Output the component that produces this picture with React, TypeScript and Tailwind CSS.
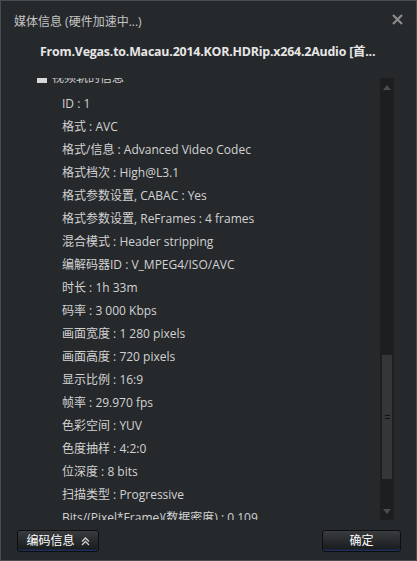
import React from "react";

const rows: string[] = [
  "ID : 1",
  "格式 : AVC",
  "格式/信息 : Advanced Video Codec",
  "格式档次 : High@L3.1",
  "格式参数设置, CABAC : Yes",
  "格式参数设置, ReFrames : 4 frames",
  "混合模式 : Header stripping",
  "编解码器ID : V_MPEG4/ISO/AVC",
  "时长 : 1h 33m",
  "码率 : 3 000 Kbps",
  "画面宽度 : 1 280 pixels",
  "画面高度 : 720 pixels",
  "显示比例 : 16:9",
  "帧率 : 29.970 fps",
  "色彩空间 : YUV",
  "色度抽样 : 4:2:0",
  "位深度 : 8 bits",
  "扫描类型 : Progressive",
  "Bits/(Pixel*Frame)(数据密度) : 0.109",
  "Stream size : 1.95 GiB (92%)",
];

const font = { fontFamily: '"Open Sans", "Noto Sans CJK SC", sans-serif' };

function Scrollbar() {
  return (
    <div className="w-[14px] h-full bg-[#1d1e1f] flex flex-col items-center">
      <div className="h-[18px] flex items-center justify-center">
        <svg width="8" height="5" viewBox="0 0 8 5">
          <path d="M0 5 L4 0 L8 5 Z" fill="#4a4c4e" />
        </svg>
      </div>
      <div className="flex-1" />
      <div className="w-[10px] h-[124px] bg-[#353637] flex items-center justify-center">
        <div className="flex flex-col gap-[2px]">
          <div className="w-[5px] h-px bg-[#111]" />
          <div className="w-[5px] h-px bg-[#111]" />
        </div>
      </div>
      <div className="h-[41px] flex items-end justify-center pb-[6px]">
        <svg width="8" height="5" viewBox="0 0 8 5">
          <path d="M0 0 L8 0 L4 5 Z" fill="#4a4c4e" />
        </svg>
      </div>
    </div>
  );
}

export default function App() {
  return (
    <div
      className="w-[417px] h-[561px] bg-[#26292c] border border-[#4a4d50] flex flex-col text-[#d2d2d2] overflow-hidden"
      style={font}
    >
      {/* title bar */}
      <div className="h-[41px] flex items-center justify-between pl-[13px] pr-[13px]">
        <span className="text-[12px] text-[#c4c4c4] whitespace-nowrap">媒体信息 (硬件加速中...)</span>
        <svg width="11" height="11" viewBox="0 0 11 11" className="mt-[-4px]">
          <path d="M1 1 L10 10 M10 1 L1 10" stroke="#8c8c8c" strokeWidth="2.2" />
        </svg>
      </div>
      {/* file name */}
      <div className="h-[20px] pl-[39px] flex items-center">
        <span className="text-[12.4px] font-bold text-[#e6e6e6] whitespace-nowrap tracking-[-0.2px]">
          From.Vegas.to.Macau.2014.KOR.HDRip.x264.2Audio<span className="ml-[3px]">[首...</span>
        </span>
      </div>
      {/* stream info list, scrolled slightly past its heading */}
      <div className="mt-[16px] h-[442px] flex pl-[36px] pr-[22px]">
        <div className="flex-1 overflow-hidden">
          <div className="mt-[-8px]">
            <div className="h-[16px] flex items-center gap-[5px] text-[12px]">
              <div className="w-[10px] h-[8px] bg-[#d8d8d8] mt-[2px]" />
              <span>视频轨的信息</span>
            </div>
            <div className="pl-[25px] pt-[6px]">
              {rows.map((r) => (
                <div key={r} className="h-[23px] flex items-center text-[12px] whitespace-nowrap">
                  {r}
                </div>
              ))}
            </div>
          </div>
        </div>
        <Scrollbar />
      </div>
      {/* footer buttons */}
      <div className="flex-1 flex items-start justify-between pl-[16px] pr-[15px] pt-[10px]">
        <button className="w-[82px] h-[22px] rounded-[3px] border border-[#0d0e0f] bg-gradient-to-b from-[#3a3d40] to-[#17191b] shadow-[inset_0_-2px_2px_-1px_#1f3b78] flex items-center justify-center gap-[6px] text-[12px] leading-none text-white">
          <span>编码信息</span>
          <svg width="9" height="9" viewBox="0 0 9 9">
            <path d="M1 4.5 L4.5 1 L8 4.5 M1 8 L4.5 4.5 L8 8" stroke="#cfcfcf" strokeWidth="1.3" fill="none" />
          </svg>
        </button>
        <button className="w-[79px] h-[22px] rounded-[3px] border border-[#0d0e0f] bg-gradient-to-b from-[#3a3d40] to-[#17191b] shadow-[inset_0_-2px_2px_-1px_#1f3b78] flex items-center justify-center text-[12px] leading-none text-white">
          确定
        </button>
      </div>
    </div>
  );
}
